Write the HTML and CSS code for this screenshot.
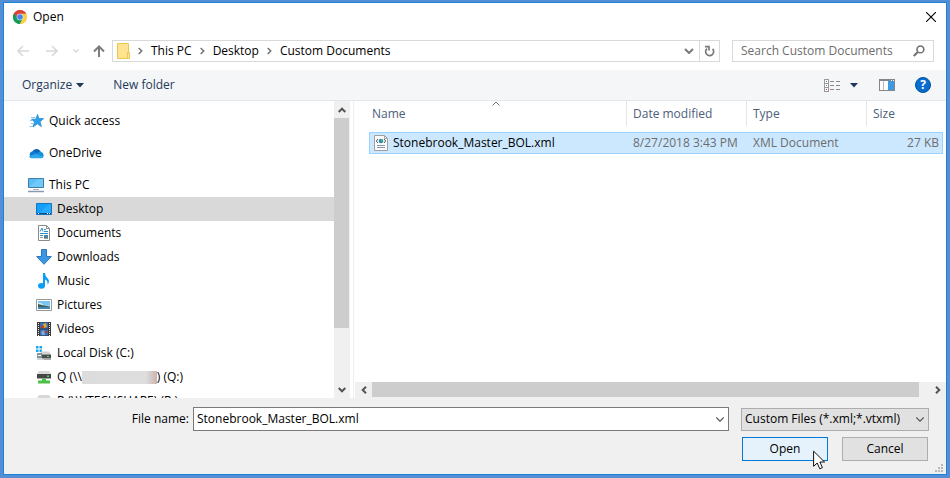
FILE: index.html
```html
<!DOCTYPE html>
<html lang="en">
<head>
<meta charset="utf-8">
<title>Open</title>
<link rel="stylesheet" href="styles.css">
</head>
<body>
<main class="dialog">
  <header class="titlebar">
    <svg class="chrome" width="14" height="14" viewBox="0 0 14 14" aria-hidden="true">
      <path d="M7 7L.94 3.5A7 7 0 0 1 13.06 3.5z" fill="#db4437"/>
      <path d="M7 7L13.06 3.5A7 7 0 0 1 7 14z" fill="#ffcd40"/>
      <path d="M7 7L7 14A7 7 0 0 1 .94 3.5z" fill="#0f9d58"/>
      <path d="M7 3.8H13.2L13.06 3.5A7 7 0 0 0 .94 3.5L4.2 8.6z" fill="#db4437"/>
      <path d="M.94 3.5A7 7 0 0 0 7 14L9.8 8.6H4.2z" fill="#0f9d58"/>
      <path d="M9.8 8.6L7 14A7 7 0 0 0 13.2 3.8H7z" fill="#ffcd40"/>
      <circle cx="7" cy="7" r="3.3" fill="#f1f1f1"/>
      <circle cx="7" cy="7" r="2.8" fill="#4285f4"/>
    </svg>
    <h1 class="title">Open</h1>
    <button class="plain close" aria-label="Close">
      <svg width="10" height="10" viewBox="0 0 10 10"><path d="M0 0L10 10M10 0L0 10" stroke="#000" stroke-width="1.1"/></svg>
    </button>
  </header>

  <nav class="navbar" aria-label="Location">
    <div class="history">
      <button class="plain" aria-label="Back"><svg width="12" height="12" viewBox="0 0 12 12" fill="none" stroke="#d9d9d9" stroke-width="1.6"><path d="M12 6H1M6 1L1 6L6 11"/></svg></button>
      <button class="plain" aria-label="Forward"><svg width="12" height="12" viewBox="0 0 12 12" fill="none" stroke="#d9d9d9" stroke-width="1.6"><path d="M0 6H11M6 1L11 6L6 11"/></svg></button>
      <button class="plain recent" aria-label="Recent locations"><svg width="6" height="4" viewBox="0 0 6 4" fill="none" stroke="#d9d9d9" stroke-width="1.4"><path d="M.5 .5L3 3L5.5 .5"/></svg></button>
      <button class="plain" aria-label="Up"><svg width="12" height="12" viewBox="0 0 12 12" fill="none" stroke="#7c7c7c" stroke-width="2"><path d="M6 12V1.5M1 6.5L6 1.5L11 6.5"/></svg></button>
    </div>
    <div class="address">
      <svg class="folder" width="13" height="16" viewBox="0 0 13 16" aria-hidden="true"><path d="M.5 .5H11.5V9.5H12.5V15.5H.5z" fill="#ffe391" stroke="#ecc750"/><path d="M10.5 15V9.5H12" fill="none" stroke="#ecc750"/></svg>
      <svg class="sep" width="5" height="8" viewBox="0 0 5 8" fill="none" stroke="#777" stroke-width="1.6"><path d="M.7 1L3.7 4L.7 7"/></svg>
      <a class="crumb" href="#">This PC</a>
      <svg class="sep" width="5" height="8" viewBox="0 0 5 8" fill="none" stroke="#777" stroke-width="1.6"><path d="M.7 1L3.7 4L.7 7"/></svg>
      <a class="crumb" href="#">Desktop</a>
      <svg class="sep" width="5" height="8" viewBox="0 0 5 8" fill="none" stroke="#777" stroke-width="1.6"><path d="M.7 1L3.7 4L.7 7"/></svg>
      <a class="crumb" href="#">Custom Documents</a>
      <button class="plain previous" aria-label="Previous locations"><svg width="10" height="6" viewBox="0 0 10 6" fill="none" stroke="#7a7a7a" stroke-width="2"><path d="M1 1L5 5L9 1"/></svg></button>
      <button class="plain refresh" aria-label="Refresh"><svg width="11" height="12" viewBox="0 0 11 12" fill="none" stroke="#7a7a7a" stroke-width="1.7"><path d="M8.6 3.9A4 4 0 1 1 3 3.6M1 1.6H5V5.6"/></svg></button>
    </div>
    <div class="search">
      <input type="search" class="search-input" aria-label="Search Custom Documents" placeholder="Search Custom Documents">
      <svg width="12" height="12" viewBox="0 0 12 12" fill="none" stroke="#707070" aria-hidden="true"><circle cx="7.4" cy="4.4" r="3.4" stroke-width="1.6"/><path d="M4.8 7L.8 11" stroke-width="2"/></svg>
    </div>
  </nav>

  <div class="toolbar" role="toolbar" aria-label="Commands">
    <button class="plain command">Organize <svg width="8" height="5" viewBox="0 0 8 5"><path d="M0 0H8L4 4.6z" fill="#1e395b"/></svg></button>
    <button class="plain command">New folder</button>
    <button class="plain view" aria-label="Change your view">
      <svg width="17" height="13" viewBox="0 0 17 13" shape-rendering="crispEdges"><path d="M.5 .5H4.5V12.5H.5zM.5 4.5H4.5M.5 8.5H4.5" fill="#fff" stroke="#999"/><path d="M6 2.5H16M6 6.5H16M6 10.5H16" stroke="#888" stroke-dasharray="4 2"/><path d="M2 2H3V3H2z" fill="#3c7fc0"/><path d="M2 6H3V7H2z" fill="#38a0e0"/><path d="M2 10H3V11H2z" fill="#d33"/></svg>
      <svg width="8" height="5" viewBox="0 0 8 5"><path d="M0 0H8L4 4.6z" fill="#1e395b"/></svg>
    </button>
    <button class="plain preview" aria-label="Show the preview pane">
      <svg width="16" height="12" viewBox="0 0 16 12" shape-rendering="crispEdges"><path d="M.5 .5H15.5V11.5H.5z" fill="#fff" stroke="#858585"/><path d="M0 1.5H16" stroke="#858585"/><path d="M4.5 2V11" stroke="#bbb"/><path d="M9 2H15V11H9z" fill="#3c99e4"/><path d="M12 1H13V2H12zM14 1H15V2H14z" fill="#fff"/></svg>
    </button>
    <button class="help" aria-label="Get help">?</button>
  </div>

  <section class="browser">
    <aside class="sidebar">
      <ul class="tree">
        <li class="node root">
          <svg class="icon" width="16" height="16" viewBox="0 0 16 16"><path d="M9.6 1.5L10.8 5.6H15.6L12 8.8L13.4 13.6L9.4 10.8L5 14L6.6 9.2L3.6 6.2H7.7z" fill="#29a0ee" stroke="#1683d0" stroke-width=".7"/><path d="M3 4.5H7M2 7.500H5M3 10.5H6M1.500 13.500H5" stroke="#8fc4e8"/></svg>Quick access</li>
        <li class="node root">
          <svg class="icon" width="16" height="16" viewBox="0 0 16 16"><path d="M4 8A4.600 4.600 0 0 1 12.300 6L14 10H3z" fill="#0a63b8"/><path d="M3.800 6.500Q6 5.800 8 7.300L13 11H2A3.300 3.300 0 0 1 3.800 6.500z" fill="#1479d4"/><path d="M9 8.500Q11 5.300 13.300 7A3.300 3.300 0 0 1 14 13H9z" fill="#1490df"/><path d="M1 11.600Q4 9.800 8 8.700L15.400 11.700Q14.800 13.200 13 13.300H3.500Q1.500 13.200 1 11.600z" fill="#2ba7ea"/></svg>OneDrive</li>
        <li class="node root">
          <svg class="icon" width="16" height="16" viewBox="0 0 16 16"><path d="M.5 1.500H15.500V10.500H.5z" fill="#5abdf5" stroke="#417ca8"/><path d="M1 10L10 2H15V10z" fill="#7fd0fc" opacity=".6"/><path d="M5 12.500H11" stroke="#a8b4c2"/><path d="M0 14.500H16" stroke="#8c9ab0" stroke-width="1.500"/></svg>This PC</li>
        <li class="node selected">
          <svg class="icon" width="16" height="16" viewBox="0 0 16 16"><path d="M.5 2.500H15.500V13.500H.5z" fill="#12a0fb" stroke="#1673c0"/><path d="M3 12L13 3H15V12z" fill="#36b2ff" opacity=".6"/><path d="M1 12.500H15" stroke="#0b4f8c"/><path d="M2 12.500H3M11 12.500H12M13 12.500H14" stroke="#fff"/></svg>Desktop</li>
        <li class="node">
          <svg class="icon" width="16" height="16" viewBox="0 0 16 16"><path d="M2.500 .5H10.500L13.500 3.500V15.500H2.500z" fill="#fff" stroke="#8b8b8b"/><path d="M10.500 .5V3.500H13.500" fill="none" stroke="#8b8b8b"/><path d="M4 6.500L6 3L7 6.500M8 4.500H10M8 6.500H12M4 8.500H12M4 10.500H7" fill="none" stroke="#2c8fd0"/><path d="M4 12.500H7M8 13.500H12" stroke="#999"/><path d="M8 10H12V13H8z" fill="#557fa0"/></svg>Documents</li>
        <li class="node">
          <svg class="icon" width="16" height="16" viewBox="0 0 16 16"><path d="M5.500 .5H10.500V7.500H15.300L8 15.300L.7 7.500H5.500z" fill="#3b96e4" stroke="#2c78bd"/></svg>Downloads</li>
        <li class="node">
          <svg class="icon" width="16" height="16" viewBox="0 0 16 16"><ellipse cx="5.500" cy="12.800" rx="3.500" ry="2.900" fill="#0a9df5"/><path d="M7 0H9Q9 3 11.500 5.200Q14.500 8 11.500 11.800Q12 7.500 9 6.500V13H7z" fill="#0a9df5"/></svg>Music</li>
        <li class="node">
          <svg class="icon" width="16" height="16" viewBox="0 0 16 16"><path d="M.5 2.500H15.500V13.500H.5z" fill="#fff" stroke="#999"/><path d="M2 4H14V9H2z" fill="#7cc5f0"/><path d="M2 6.500L4 5.500L8 8L14 9H2z" fill="#d8eef8"/><path d="M2 7L6 8L14 9.500V10H2z" fill="#35635e"/><path d="M2 10H14V12H2z" fill="#4a86b4"/></svg>Pictures</li>
        <li class="node">
          <svg class="icon" width="16" height="16" viewBox="0 0 16 16"><path d="M1 1H15V15H1z" fill="#3a3a3a"/><path d="M4 1.500H12V7.500H4zM4 8.500H12V14.500H4z" fill="#386cb6"/><path d="M7 3L10 2L11 6L8 7z" fill="#e0a823"/><path d="M5 5H8V7H5zM9 10H11V12H9z" fill="#c33b26"/><path d="M5 11L8 9L9 14H6z" fill="#87a9d8"/><path d="M2.500 2V15M13.500 2V15" stroke="#eee" stroke-dasharray="1 1"/></svg>Videos</li>
        <li class="node">
          <svg class="icon" width="16" height="16" viewBox="0 0 16 16"><path d="M0 1H2.500V3.500H0zM3.500 1H6V3.500H3.500zM0 4.500H2.500V7H0zM3.500 4.500H6V7H3.500z" fill="#13a8f0"/><path d="M5 6.500H13L15 9.500H4z" fill="#d2d2d2"/><path d="M6 9.500H15V13.500H6z" fill="#4b4b4b"/><path d="M11 11H13V12H11z" fill="#3fdd6b"/><path d="M1 8H6V13H1z" fill="#7f969b"/><path d="M2 10H5V11H2z" fill="#fff"/><path d="M1 14H8M8 14.500H15" stroke="#a9a9a9"/></svg>Local Disk (C:)</li>
        <li class="node">
          <svg class="icon" width="16" height="16" viewBox="0 0 16 16"><path d="M3 2H13L15 5H1z" fill="#d8d8d8"/><path d="M1 5H15V9.500H1z" fill="#464646"/><path d="M11 6.500H13V8H11z" fill="#3fdd6b"/><path d="M6 9.500H10V11.500H14V14.500H2V11.500H6z" fill="#4cc04a"/></svg>Q (\\<span class="masked"></span>) (Q:)</li>
        <li class="node">
          <svg class="icon" width="16" height="16" viewBox="0 0 16 16"><path d="M3 2H13L15 5H1z" fill="#d8d8d8"/><path d="M1 5H15V9.500H1z" fill="#464646"/><path d="M6 9.500H10V11.500H14V14.500H2V11.500H6z" fill="#4cc04a"/></svg>R (\\VTECHSHARE) (R:)</li>
      </ul>
      <div class="scroll vertical" aria-hidden="true">
        <span class="arrow"><svg width="8" height="6" viewBox="0 0 8 6" fill="none" stroke="#555" stroke-width="2"><path d="M.7 5L4 1.700L7.300 5"/></svg></span>
        <span class="thumb"></span>
        <span class="arrow end"><svg width="8" height="6" viewBox="0 0 8 6" fill="none" stroke="#555" stroke-width="2"><path d="M.7 1L4 4.300L7.300 1"/></svg></span>
      </div>
    </aside>

    <section class="files">
      <table class="list">
        <colgroup><col><col class="date"><col class="type"><col class="size"></colgroup>
        <thead>
          <tr>
            <th class="name"><span>Name</span><svg class="sort" width="8" height="5" viewBox="0 0 8 5" fill="none" stroke="#777"><path d="M.5 4.500L4 1L7.500 4.500"/></svg></th>
            <th><span>Date modified</span></th>
            <th><span>Type</span></th>
            <th><span>Size</span></th>
          </tr>
        </thead>
        <tbody>
          <tr>
            <td class="file"><div class="entry"><svg width="14" height="16" viewBox="0 0 14 16" aria-hidden="true"><path d="M.5 .5H10.500L13.500 3.500V15.500H.5z" fill="#fafafa" stroke="#a0a0a0"/><path d="M10.500 .5V3.500H13.500" fill="none" stroke="#a0a0a0"/><circle cx="7" cy="6" r="2.300" fill="#2a8f9f"/><path d="M7 4L9 5L7 6z" fill="#69c47b"/><path d="M4 4L2.300 6L4 8M10 4L11.700 6L10 8" fill="none" stroke="#556"/><path d="M3 10.500H11M3 12.500H11" stroke="#8a94ae"/></svg>Stonebrook_Master_BOL.xml</div></td>
            <td>8/27/2018 3:43 PM</td>
            <td>XML Document</td>
            <td class="number">27 KB</td>
          </tr>
        </tbody>
      </table>
      <div class="scroll horizontal" aria-hidden="true">
        <span class="arrow"><svg width="6" height="8" viewBox="0 0 6 8" fill="none" stroke="#555" stroke-width="2"><path d="M5 .7L1.700 4L5 7.300"/></svg></span>
        <span class="thumb"></span>
        <span class="arrow end"><svg width="6" height="8" viewBox="0 0 6 8" fill="none" stroke="#555" stroke-width="2"><path d="M1 .7L4.300 4L1 7.300"/></svg></span>
      </div>
    </section>
  </section>

  <form class="footer">
    <div class="fields">
      <label class="label" for="filename">File name:</label>
      <div class="combo">
        <input id="filename" class="combo-input" type="text" value="Stonebrook_Master_BOL.xml">
        <button type="button" class="plain" aria-label="Recent file names"><svg width="8" height="5" viewBox="0 0 8 5" fill="none" stroke="#555" stroke-width="1.200"><path d="M.3 .5L4 4.200L7.700 .5"/></svg></button>
      </div>
      <div class="filter">
        <select class="filter-select" aria-label="File type"><option>Custom Files (*.xml;*.vtxml)</option></select>
        <svg class="filter-arrow" width="8" height="5" viewBox="0 0 8 5" fill="none" stroke="#555" stroke-width="1.200"><path d="M.3 .5L4 4.200L7.700 .5"/></svg>
      </div>
    </div>
    <div class="actions">
      <button type="button" class="button primary">Open
        <svg class="cursor" width="13" height="20" viewBox="0 0 13 20" aria-hidden="true"><path d="M.6 1.200V16.300L4.200 13L6.800 18.800L9.400 17.600L6.900 12H11.600z" fill="#fff" stroke="#111"/></svg>
      </button>
      <button type="button" class="button">Cancel</button>
    </div>
    <svg class="grip" width="8" height="8" viewBox="0 0 8 8" fill="#b8b8b8" aria-hidden="true"><path d="M6 0H8V2H6zM3 3H5V5H3zM6 3H8V5H6zM0 6H2V8H0zM3 6H5V8H3zM6 6H8V8H6z"/></svg>
  </form>
</main>
</body>
</html>
```
FILE: styles.css
```css
* {
  box-sizing: border-box;
}

body {
  margin: 0;
  height: 100vh;
  padding: 2px 3px 3px;
  background: #548fd6;
  color: #000;
  font: 12px/16px "Open Sans", "Noto Sans", sans-serif;
}

button,
input,
select {
  font: inherit;
  color: inherit;
  margin: 0;
}

svg {
  display: block;
  flex: none;
}

.plain {
  display: flex;
  align-items: center;
  justify-content: center;
  padding: 0;
  border: 0;
  background: none;
}

.dialog {
  display: flex;
  flex-direction: column;
  height: 100%;
  border: 1px solid #1883d7;
  background: #fff;
}

.titlebar {
  display: flex;
  align-items: center;
  height: 28px;
  padding: 0 10px 0 9px;
}

.title {
  flex: 1;
  margin: 0 0 0 6px;
  font: inherit;
}

/* Location bar */

.navbar {
  display: flex;
  align-items: center;
  height: 39px;
  padding: 0 12px 0 13px;
}

.history {
  display: flex;
  gap: 17px;
  width: 95px;
}

.recent {
  margin: 0 -3px 0 -2px;
}

.address {
  flex: 1;
  display: flex;
  align-items: center;
  height: 22px;
  padding-left: 4px;
  border: 1px solid #d9d9d9;
}

.sep {
  margin: 0 8px;
}

.crumb {
  color: inherit;
  text-decoration: none;
}

.previous {
  width: 20px;
  margin-left: auto;
}

.refresh {
  width: 20px;
  height: 100%;
  border-left: 1px solid #d9d9d9;
}

.search {
  display: flex;
  align-items: center;
  width: 202px;
  height: 22px;
  margin-left: 12px;
  padding: 0 8px;
  border: 1px solid #d9d9d9;
}

.search-input {
  flex: 1;
  min-width: 0;
  padding: 0;
  border: 0;
  outline: 0;
  appearance: none;
}

.search-input::placeholder {
  color: #6d6d6d;
}

/* Commands */

.toolbar {
  display: flex;
  align-items: center;
  height: 31px;
  padding: 0 15px 0 18px;
  border-bottom: 1px solid #e4e6e9;
  background: #f5f6f7;
}

.command {
  gap: 4px;
  margin-right: 29px;
  color: #1e395b;
}

.view {
  gap: 9px;
  margin-left: auto;
}

.preview {
  margin: 0 20px 0 21px;
}

.help {
  width: 16px;
  height: 16px;
  padding: 0;
  border: 1px solid #00529c;
  border-radius: 50%;
  background: #0a6cce;
  color: #fff;
  font-weight: 700;
  line-height: 14px;
}

/* Folder tree */

.browser {
  flex: 1;
  display: flex;
  min-height: 0;
}

.sidebar {
  display: flex;
  flex: none;
  width: 350px;
  padding-right: 3px;
  border-right: 1px solid #eee;
}

.tree {
  flex: 1;
  margin: 0;
  padding: 8px 0 0;
  overflow: hidden;
  list-style: none;
}

.node {
  display: flex;
  align-items: center;
  height: 24px;
  padding-left: 32px;
}

.root {
  padding-left: 24px;
}

.root + .root {
  margin-top: 8px;
}

.selected {
  background: #d9d9d9;
}

.icon {
  margin-right: 5px;
}

.masked {
  width: 75px;
  height: 13px;
  background: linear-gradient(90deg, #dcdcdc, #dedede 85%, #c9b4b0);
}

/* Scroll bars */

.scroll {
  display: flex;
  background: #f0f0f0;
}

.arrow {
  display: grid;
  place-items: center;
  width: 17px;
  height: 17px;
}

.end {
  margin: auto 0 0 auto;
}

.thumb {
  background: #cdcdcd;
}

.vertical {
  flex-direction: column;
  width: 16px;
}

.vertical .arrow {
  width: 16px;
}

.vertical .thumb {
  width: 15px;
  height: 80%;
  max-height: 210px;
}

.horizontal {
  height: 16px;
  margin: auto 0 0 1px;
}

.horizontal .arrow {
  height: 16px;
}

.horizontal .thumb {
  flex: 1;
  height: 15px;
}

.horizontal .end {
  width: 27px;
  padding-left: 10px;
  margin: 0;
}

/* File list */

.files {
  flex: 1;
  display: flex;
  flex-direction: column;
  min-width: 0;
}

.list {
  margin: 0 3px 0 15px;
  border-spacing: 0;
  table-layout: fixed;
}

.date,
.type {
  width: 120px;
}

.size {
  width: 77px;
}

.list th {
  position: relative;
  padding: 0 0 6px;
  color: #4c607a;
  font-weight: 400;
  text-align: left;
}

.list th span {
  display: block;
  height: 25px;
  padding-left: 6px;
  border-left: 1px solid #e5e5e5;
  line-height: 26px;
}

.list .name span {
  padding-left: 3px;
  border-left: 0;
}

.sort {
  position: absolute;
  top: 0;
  left: calc(50% - 6px);
}

.list td {
  height: 22px;
  padding: 0 0 0 7px;
  border: solid #99d1ff;
  border-width: 1px 0;
  background: #cce8ff;
  color: #6d6d6d;
}

.list .file {
  padding-left: 4px;
  border-left-width: 1px;
  color: #000;
}

.list .number {
  padding: 0 3px 0 0;
  border-right-width: 1px;
  text-align: right;
}

.entry {
  display: flex;
  align-items: center;
  gap: 5px;
}

/* File name and actions */

.footer {
  position: relative;
  padding: 9px 17px 13px;
  background: #f0f0f0;
}

.fields {
  display: flex;
  align-items: center;
}

.label {
  width: 168px;
  text-align: right;
}

.combo {
  flex: 1;
  display: flex;
  height: 24px;
  margin: 0 12px 0 4px;
  border: 1px solid #7a7a7a;
  background: #fff;
}

.combo .plain {
  width: 17px;
}

.combo-input {
  flex: 1;
  min-width: 0;
  padding: 0 3px;
  border: 0;
  outline: 0;
  background: none;
}

.filter {
  position: relative;
  width: 188px;
}

.filter-select {
  display: block;
  width: 100%;
  height: 23px;
  padding: 0 3px;
  border: 1px solid #adadad;
  border-radius: 0;
  background: #e1e1e1;
  appearance: none;
}

.filter-arrow {
  position: absolute;
  top: 9px;
  right: 5px;
  pointer-events: none;
}

.actions {
  display: flex;
  justify-content: flex-end;
  gap: 14px;
  margin: 6px 1px 0 0;
}

.button {
  position: relative;
  width: 86px;
  height: 24px;
  padding: 0;
  border: 1px solid #adadad;
  background: #e1e1e1;
}

.primary {
  border-color: #0078d7;
  background: #e5f1fb;
}

.cursor {
  position: absolute;
  top: 12px;
  left: 70px;
}

.grip {
  position: absolute;
  right: 3px;
  bottom: 2px;
}
```
